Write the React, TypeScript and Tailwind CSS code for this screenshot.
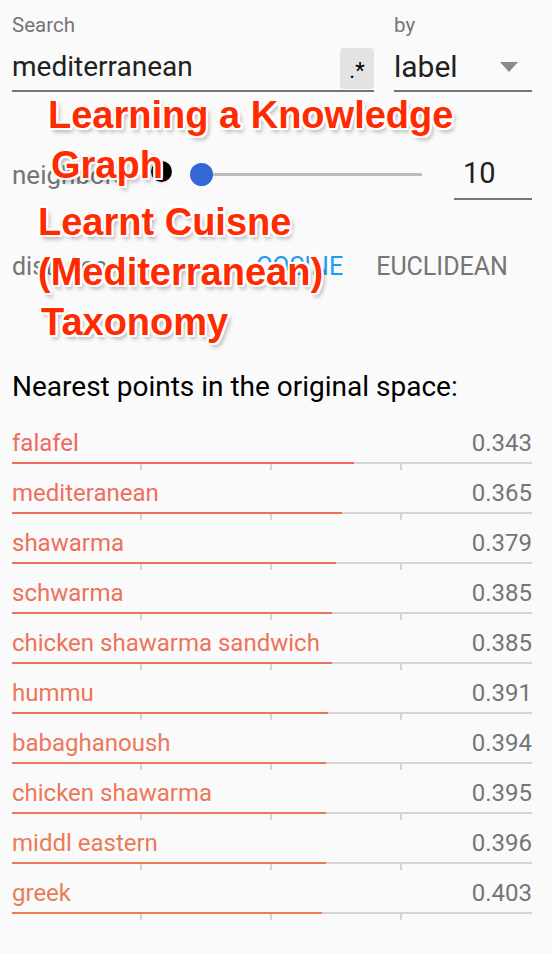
import React from "react";

interface Neighbor {
  label: string;
  value: string;
  redWidth: number;
  color: string;
}

const neighbors: Neighbor[] = [
  { label: "falafel", value: "0.343", redWidth: 342, color: "#ef6a5e" },
  { label: "mediteranean", value: "0.365", redWidth: 330, color: "#ee6e5d" },
  { label: "shawarma", value: "0.379", redWidth: 324, color: "#ee705c" },
  { label: "schwarma", value: "0.385", redWidth: 320, color: "#ed725c" },
  { label: "chicken shawarma sandwich", value: "0.385", redWidth: 320, color: "#ed735b" },
  { label: "hummu", value: "0.391", redWidth: 316, color: "#ec755b" },
  { label: "babaghanoush", value: "0.394", redWidth: 314, color: "#ec775a" },
  { label: "chicken shawarma", value: "0.395", redWidth: 314, color: "#eb7859" },
  { label: "middl eastern", value: "0.396", redWidth: 314, color: "#eb7a59" },
  { label: "greek", value: "0.403", redWidth: 310, color: "#ea7c58" },
];

const overlay =
  "font-['Liberation_Sans',Arial,sans-serif] font-bold text-[38px] leading-[50px] text-[#ff2a00] whitespace-nowrap [text-shadow:2px_0_0_#fff,-2px_0_0_#fff,0_2px_0_#fff,0_-2px_0_#fff,2px_2px_0_#fff,-2px_-2px_0_#fff,2px_-2px_0_#fff,-2px_2px_0_#fff,3px_4px_4px_rgba(0,0,0,0.3)]";

const NeighborRow = ({ label, value, redWidth, color }: Neighbor) => (
  <div className="h-[50px] flex flex-col">
    <div className="pt-[6px] flex justify-between text-[24px] leading-[28px]">
      <span style={{ color }}>{label}</span>
      <span className="text-[#757575]">{value}</span>
    </div>
    <div className="mt-[5px] h-[2px] flex bg-[#d4d4d4]">
      <div className="h-full" style={{ width: redWidth, backgroundColor: color }} />
    </div>
    <div className="flex h-[6px]">
      <div className="w-[130px] border-r-2 border-[#d4d4d4]" />
      <div className="w-[130px] border-r-2 border-[#d4d4d4]" />
      <div className="w-[130px] border-r-2 border-[#d4d4d4]" />
    </div>
  </div>
);

export default function App() {
  return (
    <div className="relative w-[552px] h-[954px] bg-[#fafafa] pl-[12px] pr-[20px] font-['Roboto',sans-serif] overflow-hidden">
      {/* search row */}
      <div className="flex gap-[20px] pt-[13px]">
        <div className="w-[362px] flex flex-col">
          <div className="text-[20.5px] leading-[24px] text-[#757575]">Search</div>
          <div className="h-[55px] flex items-end justify-between border-b-2 border-[#757575]">
            <span className="text-[28px] leading-[33px] pb-[7px] text-[#212121]">mediterranean</span>
            <div className="w-[34px] h-[41px] mb-px rounded-[4px] bg-[#e3e3e3] flex items-end justify-center pb-[6px] text-[22px] leading-[24px] text-black">
              .*
            </div>
          </div>
        </div>
        <div className="flex-1 flex flex-col">
          <div className="text-[20.5px] leading-[24px] text-[#757575]">by</div>
          <div className="h-[55px] flex items-end justify-between border-b-2 border-[#757575]">
            <span className="text-[30px] leading-[35px] pb-[6px] text-[#212121]">label</span>
            <svg width="18" height="10" viewBox="0 0 18 10" className="mb-[18px] mr-[14px]">
              <path d="M0 0 L18 0 L9 10 Z" fill="#8a8a8a" />
            </svg>
          </div>
        </div>
      </div>

      {/* neighbors row */}
      <div className="mt-[57px] h-[51px] flex items-center">
        <div className="w-[139px] text-[26px] leading-[30px] text-[#757575]">neighbors</div>
        <div className="w-[21px] h-[21px] rounded-full bg-black mb-[6px]" />
        <div className="relative ml-[18px] w-[244px] h-[23px] flex items-center">
          <div className="ml-[12px] w-[220px] h-[3px] bg-[#bdbdbd]" />
          <div className="absolute left-0 top-0 w-[23px] h-[23px] rounded-full bg-[#3367d6]" />
        </div>
        <div className="ml-[20px] w-[78px] h-full flex items-end border-b-2 border-[#757575] pl-[9px] pb-[8px]">
          <span className="text-[29px] leading-[34px] text-[#212121]">10</span>
        </div>
      </div>

      {/* distance row */}
      <div className="mt-[52px] flex text-[25px] leading-[30px]">
        <div className="w-[244px] text-[#757575]">distance</div>
        <div className="text-[#1e9bf0]">COSINE</div>
        <div className="ml-[33px] text-[#757575]">EUCLIDEAN</div>
      </div>

      <div className="mt-[89px] text-[28px] leading-[32px] text-black">
        Nearest points in the original space:
      </div>

      <div className="mt-[20px] flex flex-col">
        {neighbors.map((n) => (
          <NeighborRow key={n.label} {...n} />
        ))}
      </div>

      {/* annotation overlay */}
      <div className={`absolute left-[48px] top-[90px] ${overlay}`}>
        <div>Learning a Knowledge</div>
        <div className="ml-[3px]">Graph</div>
      </div>
      <div className={`absolute left-[38px] top-[197px] ${overlay}`}>
        <div>Learnt Cuisne</div>
        <div>(Mediterranean)</div>
        <div className="ml-[3px]">Taxonomy</div>
      </div>
    </div>
  );
}
